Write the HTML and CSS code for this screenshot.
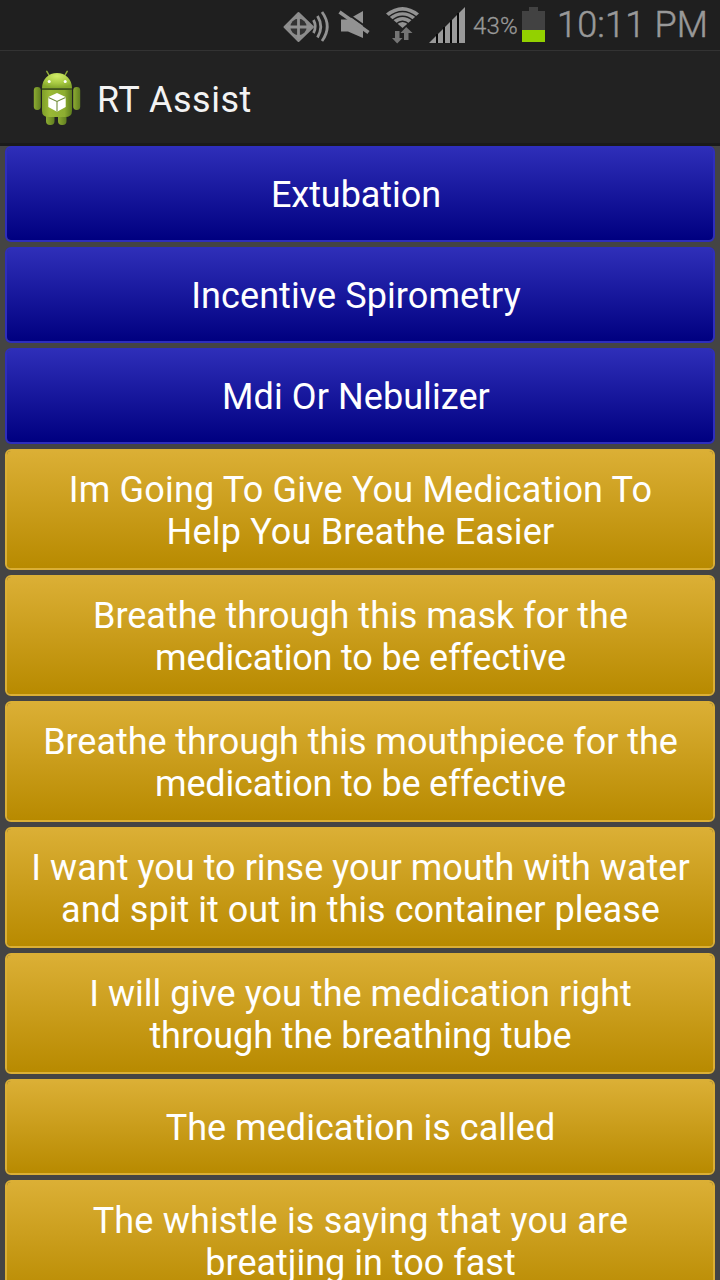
FILE: index.html
```html
<!DOCTYPE html>
<html lang="en">
<head>
<meta charset="utf-8">
<title>RT Assist</title>
<link rel="stylesheet" href="styles.css">
</head>
<body>
<div class="screen">
  <header class="status">
    <svg class="status-icons" width="190" height="50" viewBox="280 0 190 50">
      <path d="M298.500 13L313 27L298.500 41L284.500 27Z" fill="#8c8c8c" stroke="#8c8c8c" stroke-width="2" stroke-linejoin="round"/>
      <circle cx="298.500" cy="27" r="8.200" fill="#333"/>
      <path d="M298.500 15V39M286 27H311" stroke="#909090" stroke-width="2.800"/>
      <path d="M313.500 20Q317 26.500 313.500 33M317.500 16Q324 26.500 317.500 37.500M322 12Q332.500 26.500 322 41" fill="none" stroke="#929292" stroke-width="2.800"/>
      <path d="M341 19.500H348L363 11V38L348 31.500H341Z" fill="#929292"/>
      <path d="M341.500 9.500L370.500 30" stroke="#1f1f1f" stroke-width="2"/>
      <path d="M339.500 12L368.500 32.500" stroke="#929292" stroke-width="3.600"/>
      <path d="M386 13.500Q402.500 0.500 419 13.500L402.500 28Z" fill="#929292"/>
      <path d="M388.500 17Q402.500 6 416.500 17M392 20.500Q402.500 12 413 20.500M396 24Q402.500 18.500 409 24" fill="none" stroke="#1f1f1f" stroke-width="1.400"/>
      <path d="M395 31H399.500V38H402.500L397.200 43.500L392 38H395Z" fill="#747474"/>
      <path d="M404 40V33H400.500L406.200 27L412.500 33H408.500V40Z" fill="#747474"/>
      <path d="M429 43L465 7V43Z" fill="#999"/>
      <path d="M437 34V43M444 27V43M451 20V43M458 13V43" stroke="#080808" stroke-width="2"/>
    </svg>
    <span class="percent">43%</span>
    <svg class="battery" width="23" height="35" viewBox="0 0 23 35">
      <path d="M7 0H16V4H23V23H0V4H7Z" fill="#424242"/>
      <path d="M0 23H23V35H0Z" fill="#93d100"/>
    </svg>
    <span class="clock">10:11 PM</span>
  </header>
  <div class="action-bar">
    <svg class="logo" width="48" height="56" viewBox="33 70 48 56">
      <defs>
        <linearGradient id="body" x1="0" x2="1"><stop offset="0" stop-color="#7f9f28"/><stop offset=".25" stop-color="#9ab936"/><stop offset=".75" stop-color="#8dad31"/><stop offset="1" stop-color="#5d7c1d"/></linearGradient>
        <linearGradient id="limb" x1="0" x2="1"><stop offset="0" stop-color="#8cab32"/><stop offset="1" stop-color="#617f20"/></linearGradient>
        <radialGradient id="head" cx=".5" cy=".2" r=".75"><stop offset="0" stop-color="#d1ec68"/><stop offset=".6" stop-color="#a9ca43"/><stop offset="1" stop-color="#86a82d"/></radialGradient>
      </defs>
      <path d="M49.500 76L46.800 71.300M64.500 76L67.200 71.300" stroke="#91ad38" stroke-width="1.500" stroke-linecap="round"/>
      <rect x="46" y="112" width="8.500" height="13" rx="4" fill="url(#limb)"/>
      <rect x="58" y="112" width="8.500" height="13" rx="4" fill="url(#limb)"/>
      <rect x="33.800" y="87" width="7" height="23" rx="3.400" fill="url(#limb)"/>
      <rect x="73.200" y="87" width="7" height="23" rx="3.400" fill="url(#limb)"/>
      <path d="M42 90H72V111Q72 117 65 117H49Q42 117 42 111Z" fill="url(#body)"/>
      <path d="M42 88.500C42 79 48.500 73 57 73S72 79 72 88.500Z" fill="url(#head)"/>
      <path d="M42 89.300H72" stroke="#465c1a" stroke-width="1.300"/>
      <circle cx="49.200" cy="81.500" r="1.500" fill="#fff"/><circle cx="65.200" cy="81.500" r="1.500" fill="#fff"/>
      <path d="M57 93L65.700 97V107L57 111.700L48.300 107V97Z" fill="#fff"/>
      <path d="M48.500 97.500L57 101.500L65.500 97.500M57 101.500V111.500" fill="none" stroke="#708b3a" stroke-width="1.100"/>
    </svg>
    <h1 class="title">RT Assist</h1>
  </div>
  <main class="list">
    <button class="btn blue"><span class="line snug">Extubation</span></button>
    <button class="btn blue"><span class="line loose">Incentive Spirometry</span></button>
    <button class="btn blue"><span class="line loose">Mdi Or Nebulizer</span></button>
    <button class="btn gold"><span class="line wide">Im Going To Give You Medication To</span><span class="line wide">Help You Breathe Easier</span></button>
    <button class="btn gold"><span class="line">Breathe through this mask for the</span><span class="line tight">medication to be effective</span></button>
    <button class="btn gold"><span class="line snug">Breathe through this mouthpiece for the</span><span class="line tight">medication to be effective</span></button>
    <button class="btn gold"><span class="line even">I want you to rinse your mouth with water</span><span class="line even">and spit it out in this container please</span></button>
    <button class="btn gold"><span class="line even">I will give you the medication right</span><span class="line snug">through the breathing tube</span></button>
    <button class="btn gold single"><span class="line even">The medication is called</span></button>
    <button class="btn gold"><span class="line wide">The whistle is saying that you are</span><span class="line">breatjing in too fast</span></button>
  </main>
</div>
</body>
</html>
```
FILE: styles.css
```css
* { box-sizing: border-box; }
body { margin: 0; background: #444; font-family: Roboto, sans-serif; }
.screen { width: 720px; height: 1280px; overflow: hidden; display: flex; flex-direction: column; }
.status { flex: none; height: 50px; background: #1f1f1f; display: flex; align-items: flex-start; padding-left: 280px; color: #999; white-space: nowrap; }
.status-icons { flex: none; }
.percent { flex: none; width: 52px; padding-left: 3px; font-size: 24px; line-height: 52px; font-weight: 300; letter-spacing: 0.2px; -webkit-text-stroke: 0.3px #999; }
.battery { flex: none; margin-top: 7px; }
.clock { margin-left: 12px; font-size: 36px; line-height: 50px; font-weight: 300; letter-spacing: 0.2px; -webkit-text-stroke: 0.5px #999; }
.action-bar { flex: none; height: 96px; background: #222; border-top: 1px solid #333; border-bottom: 3px solid #1a1a1a; display: flex; align-items: center; padding: 2px 0 0 33px; }
.title { margin: 0 0 0 16px; padding-top: 4px; color: #f3f3f3; font-size: 36px; font-weight: 400; line-height: 42px; letter-spacing: 0.5px; }
.list { display: flex; flex-direction: column; gap: 5px; padding: 0 5px; }
.btn { flex: none; width: 710px; height: 121px; border: 2px solid; border-radius: 6px; padding: 2px 0 0 1px; display: flex; flex-direction: column; align-items: center; justify-content: center; color: #fff; font: 400 36px/42px Roboto, sans-serif; white-space: nowrap; }
.blue { height: 96px; padding-right: 9px; border-color: #2e2ebd; background: linear-gradient(#2e2eb8, #000080) padding-box; }
.gold { border-color: #dbaf35; background: linear-gradient(#dbaf35, #b88a00) padding-box; }
.single { height: 96px; }
.tight { letter-spacing: -0.18px; }
.snug { letter-spacing: -0.05px; }
.even { letter-spacing: 0.03px; }
.loose { letter-spacing: 0.08px; }
.wide { letter-spacing: 0.18px; }
```
